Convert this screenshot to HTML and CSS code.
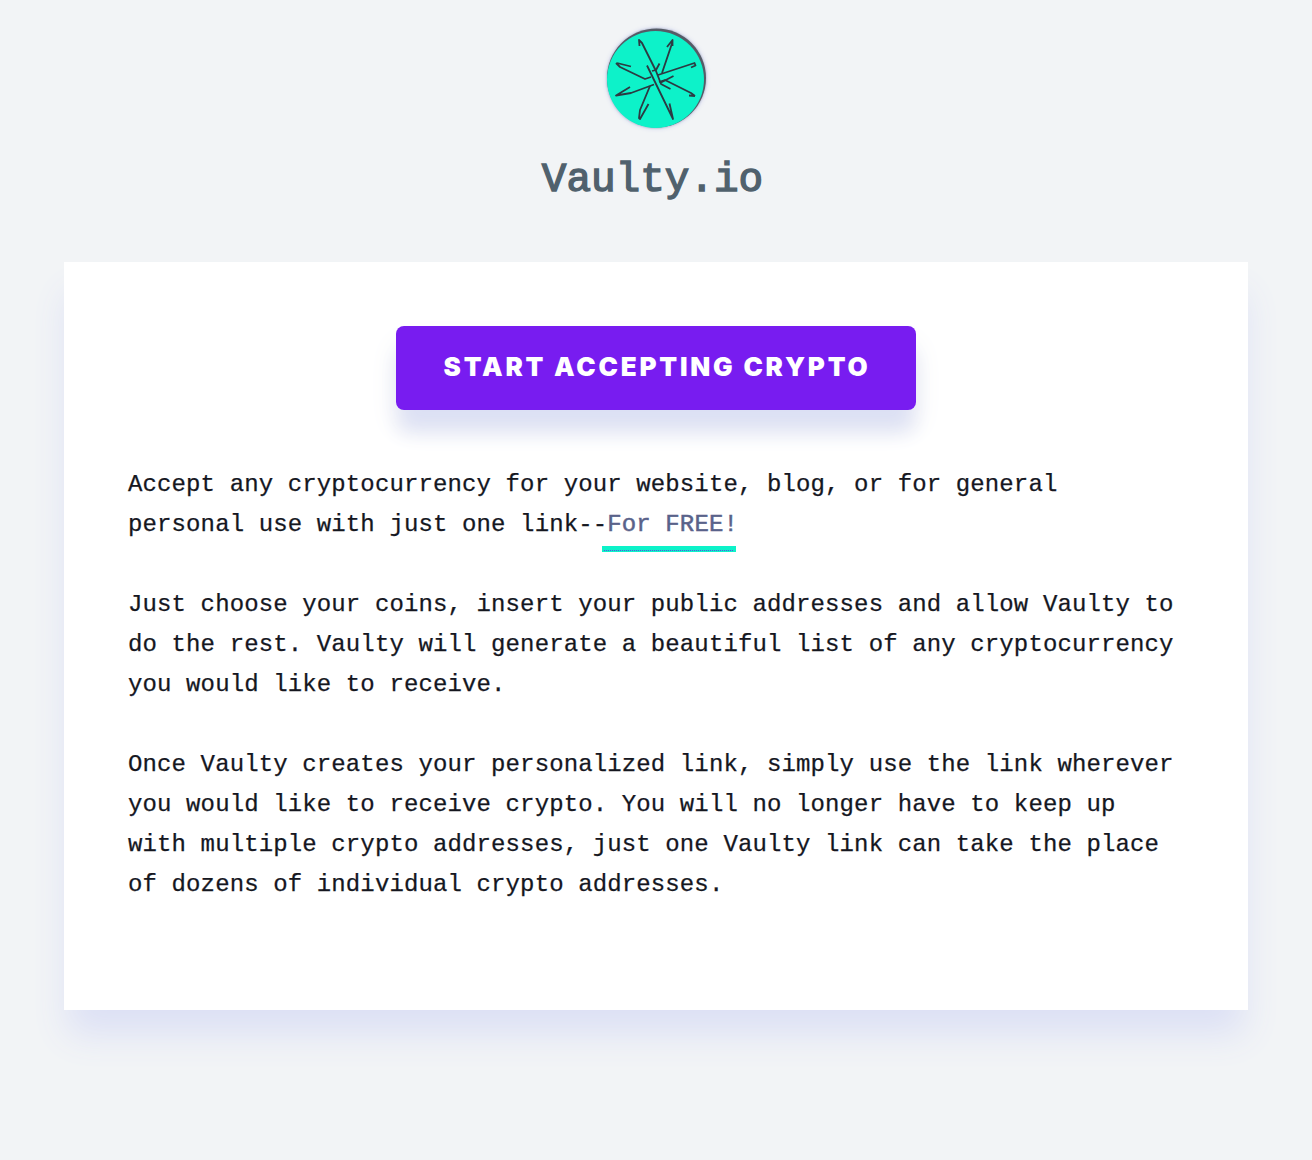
FILE: index.html
```html
<!DOCTYPE html>
<html lang="en">
<head>
<meta charset="utf-8">
<title>Vaulty.io</title>
<link rel="stylesheet" href="styles.css">
</head>
<body>
<header class="header">
  <svg class="logo" viewBox="0 0 120 124" aria-hidden="true">
    <circle class="logo-rim" cx="60.5" cy="62" r="49.5"/>
    <circle class="logo-disc" cx="59.5" cy="63.5" r="48.5"/>
    <g class="logo-lines">
      <path d="M43.500 30L43 24L46 27L60 55L65 68L74.500 73"/>
      <path d="M51 49.500L77 103L73.500 87.500M77 103L75 98"/>
      <path d="M76.500 30L76.500 24L71 31M76.500 26L66 57"/>
      <path d="M21 47L35 50.500M20 47L24 51L49 63L55 61"/>
      <path d="M95 51.500L99.500 49.500L98.500 47L62 59"/>
      <path d="M34 71L20 79.500L35 77L58 68.500"/>
      <path d="M99 80L95 77L69 64L63 66M99 80L93 79.500"/>
      <path d="M52.500 88L44 103L43 102L44 94L54 70"/>
      <path d="M63.500 47.500L60 54L56 55M77.500 60L65 66.500"/>
    </g>
  </svg>
  <h1 class="brand">Vaulty.io</h1>
</header>
<main class="card">
  <a class="cta">START ACCEPTING CRYPTO</a>
  <div class="copy">
    <p>Accept any cryptocurrency for your website, blog, or for general<br>personal use with just one link--<span class="free">For FREE!</span></p>
    <p>Just choose your coins, insert your public addresses and allow Vaulty to<br>do the rest. Vaulty will generate a beautiful list of any cryptocurrency<br>you would like to receive.</p>
    <p>Once Vaulty creates your personalized link, simply use the link wherever<br>you would like to receive crypto. You will no longer have to keep up<br>with multiple crypto addresses, just one Vaulty link can take the place<br>of dozens of individual crypto addresses.</p>
  </div>
</main>
</body>
</html>
```
FILE: styles.css
```css
* { box-sizing: border-box; }
body {
  margin: 0;
  min-height: 1160px;
  background: #f2f4f6;
  color: #15171f;
  font-family: "Liberation Mono", monospace;
}
.header {
  height: 262px;
  padding-top: 16px;
  display: flex;
  flex-direction: column;
  align-items: center;
}
.logo {
  width: 120px;
  height: 124px;
  flex: none;
  filter: drop-shadow(0 0 1px #a9adbd) drop-shadow(0 0 2px #ccd1ef);
}
.logo-rim { fill: #555b66; }
.logo-disc { fill: #0df2c9; }
.logo-lines {
  fill: none;
  stroke: #2c3a42;
  stroke-width: 1.8;
  stroke-linejoin: round;
}
.brand {
  margin: 15px 7px 0 0;
  color: #50616d;
  font-size: 41px;
  line-height: 50px;
  font-weight: 400;
  -webkit-text-stroke: 1.4px #50616d;
}
.card {
  height: 748px;
  margin: 0 64px;
  padding: 64px;
  display: flex;
  flex-direction: column;
  align-items: center;
  background: #fff;
  box-shadow: 0 28px 34px -4px #dce0f5;
}
.cta {
  width: 520px;
  height: 84px;
  flex: none;
  padding-left: 2px;
  border-radius: 8px;
  background: #781cf0;
  color: #fff;
  font: 900 26px/82px Inter, sans-serif;
  letter-spacing: 2.78px;
  text-align: center;
  white-space: nowrap;
  box-shadow: 0 24px 20px -4px #dce0f4, 0 18px 30px #eeeff3;
}
.copy {
  align-self: stretch;
  margin-top: 55px;
  font-size: 24px;
  line-height: 40px;
  letter-spacing: 0.12px;
  white-space: nowrap;
  -webkit-text-stroke: 0.25px currentColor;
}
.copy p { margin: 0 0 40px; }
.free {
  margin-left: -5px;
  padding: 0 0 14px 5px;
  color: #59628a;
  -webkit-text-stroke: 0.5px #59628a;
  background:
    repeating-linear-gradient(90deg, #5a50e0 0 1px, transparent 1px 2px) 2px calc(100% - 1px) / calc(100% - 6px) 1px no-repeat,
    linear-gradient(#0df2c9, #0df2c9) 0 100% / calc(100% - 2px) 6px no-repeat;
}
```
